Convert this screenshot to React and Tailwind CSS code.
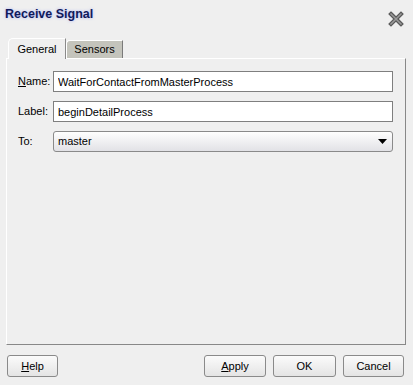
import { useState } from "react";

function Field({ accel, rest, value, onChange }) {
  return (
    <div className="flex h-[21px] items-center">
      <label className="w-[35px] shrink-0">
        {accel ? <span className="underline">{accel}</span> : null}
        {rest}
      </label>
      <input
        className="h-[21px] flex-1 border border-[#7f7f7f] bg-white px-[4px] text-[11px] text-black outline-none"
        type="text"
        value={value}
        onChange={(e) => onChange(e.target.value)}
      />
    </div>
  );
}

function Btn({ children, className = "" }) {
  return (
    <button
      type="button"
      className={
        "h-[22px] rounded-[3px] border border-[#8a8a8a] bg-gradient-to-b from-[#fbfbfb] to-[#e4e4e4] text-[11px] text-black " +
        className
      }
    >
      {children}
    </button>
  );
}

export default function App() {
  const [name, setName] = useState("WaitForContactFromMasterProcess");
  const [label, setLabel] = useState("beginDetailProcess");
  const [tab, setTab] = useState("general");

  return (
    <main className="flex h-[385px] w-[413px] flex-col bg-[#efefef] font-['Liberation_Sans',Arial,sans-serif] text-[11px] text-black">
      <div className="flex h-[37px] items-start justify-between pl-[5px] pr-[9px] pt-[5px]">
        <h1 className="text-[12.5px] font-bold text-[#101a5a] [text-shadow:0_0_3px_rgba(140,150,255,0.7)]">
          Receive Signal
        </h1>
        <svg width="16" height="16" viewBox="0 0 16 16" className="mt-[6px]">
          <path d="M3 3 L13 13 M13 3 L3 13" stroke="#5a5a5a" strokeWidth="4" strokeLinecap="square" />
          <path d="M3 3 L13 13 M13 3 L3 13" stroke="#9a9a9a" strokeWidth="1.5" strokeLinecap="square" />
        </svg>
      </div>

      <div className="flex h-[21px] items-end pl-[8px]">
        <button
          type="button"
          onClick={() => setTab("general")}
          className="relative z-10 mb-[-1px] h-[21px] w-[58px] rounded-tl-[5px] border-l border-t border-r border-white border-r-[#8a8a8a] bg-[#efefef] pt-[1px] text-[11px]"
        >
          General
        </button>
        <button
          type="button"
          onClick={() => setTab("sensors")}
          className="h-[18px] w-[57px] rounded-tl-[4px] border-l border-t border-r border-white border-r-[#7a7a7a] bg-[#c4c4bc] text-[11px]"
        >
          Sensors
        </button>
      </div>

      <section className="ml-[6px] mr-[7px] flex h-[287px] flex-col gap-[9px] border-l border-t border-r border-b border-white border-r-[#888] border-b-[#888] pl-[11px] pr-[12px] pt-[12px]">
        {tab === "general" && (
          <>
            <Field accel="N" rest="ame:" value={name} onChange={setName} />
            <Field rest="Label:" value={label} onChange={setLabel} />
            <div className="flex h-[21px] items-center">
              <span className="w-[35px] shrink-0">To:</span>
              <div className="flex h-[21px] flex-1 items-center justify-between rounded-[3px] border border-[#8a8a8a] bg-gradient-to-b from-[#fefefe] to-[#e2e2e6] pl-[4px] pr-[5px]">
                <span>master</span>
                <svg width="9" height="6" viewBox="0 0 9 6">
                  <path d="M0 0 H9 L4.5 5 Z" fill="#000" />
                </svg>
              </div>
            </div>
          </>
        )}
      </section>

      <div className="flex items-center pl-[7px] pr-[9px] pt-[10px]">
        <Btn className="w-[51px]">
          <span className="underline">H</span>elp
        </Btn>
        <div className="ml-auto flex gap-[7px]">
          <Btn className="w-[62px]">
            <span className="underline">A</span>pply
          </Btn>
          <Btn className="w-[63px]">OK</Btn>
          <Btn className="w-[61px]">Cancel</Btn>
        </div>
      </div>
    </main>
  );
}
